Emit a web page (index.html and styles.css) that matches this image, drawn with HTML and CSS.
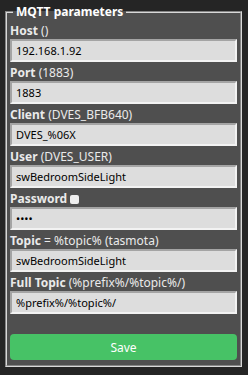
FILE: index.html
```html
<!DOCTYPE html>
<html lang="en">
<head>
    <meta charset="UTF-8">
    <meta name="viewport" content="width=device-width, initial-scale=1.0">
    <title>MQTT parameters</title>
    <link rel="stylesheet" href="styles.css">
</head>
<body>
    <fieldset class="panel">
        <legend>MQTT parameters</legend>
        <form class="mqtt-form">
            <div class="field">
                <label><b>Host</b> ()</label>
                <input type="text" value="192.168.1.92">
            </div>
            <div class="field">
                <label><b>Port</b> (1883)</label>
                <input type="text" value="1883">
            </div>
            <div class="field">
                <label><b>Client</b> (DVES_BFB640)</label>
                <input type="text" value="DVES_%06X">
            </div>
            <div class="field">
                <label><b>User</b> (DVES_USER)</label>
                <input type="text" value="swBedroomSideLight">
            </div>
            <div class="field">
                <label><b>Password</b> <input type="checkbox" class="show-pass"></label>
                <input type="password" value="****">
            </div>
            <div class="field">
                <label><b>Topic</b> = %topic% (tasmota)</label>
                <input type="text" value="swBedroomSideLight">
            </div>
            <div class="field">
                <label><b>Full Topic</b> (%prefix%/%topic%/)</label>
                <input type="text" value="%prefix%/%topic%/">
            </div>
            <button type="button" class="save-btn">Save</button>
        </form>
    </fieldset>
</body>
</html>
```

FILE: styles.css
```css
body {
    margin: 0;
    padding: 3px 6px 5px 5px;
    background-color: #252525;
    font-family: "Noto Sans", sans-serif;
    font-size: 11px;
    color: #eaeaea;
}

.panel {
    margin: 0;
    padding: 2px 3px 5px;
    background-color: #4f4f4f;
    border: 2px groove #d8d8d8;
}

.panel legend {
    padding: 0 3px;
    margin-left: 3px;
    font-size: 12px;
    font-weight: bold;
    color: #fff;
}

.mqtt-form {
    display: flex;
    flex-direction: column;
}

.field {
    display: flex;
    flex-direction: column;
    margin-bottom: 2px;
}

.field label {
    line-height: 17px;
    font-size: 12px;
}

.field input[type="text"],
.field input[type="password"] {
    box-sizing: border-box;
    width: 100%;
    height: 23px;
    margin: 0;
    padding: 0 4px;
    background-color: #dddddd;
    color: #000;
    font-family: inherit;
    font-size: 11px;
    border: 2px solid;
    border-color: #a4a4a4 #f2f2f2 #f2f2f2 #a4a4a4;
}

.show-pass {
    appearance: none;
    width: 9px;
    height: 9px;
    margin: 0;
    vertical-align: -1px;
    background-color: #eee;
    border-radius: 2px;
}

.save-btn {
    margin-top: 18px;
    height: 26px;
    border: none;
    border-radius: 4px;
    background-color: #47c266;
    color: #fff;
    font-family: inherit;
    font-size: 12px;
}
```
